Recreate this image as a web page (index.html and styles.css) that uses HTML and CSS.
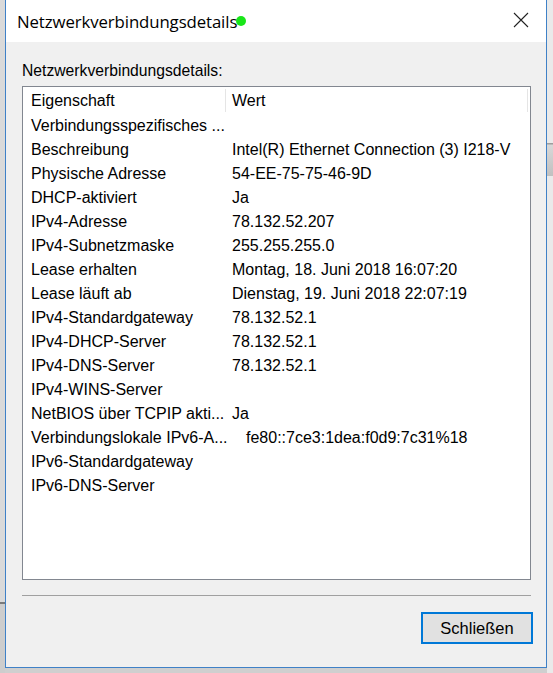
FILE: index.html
```html
<!DOCTYPE html>
<html lang="de">
<head>
<meta charset="utf-8">
<title>Netzwerkverbindungsdetails</title>
<link rel="stylesheet" href="styles.css">
</head>
<body>
<div class="desktop">
  <div class="side-strip"></div>
  <div class="window">
    <div class="titlebar">
      <span class="title">Netzwerkverbindungsdetails</span>
      <span class="dot"></span>
      <svg class="close" width="16" height="16" viewBox="0 0 16 16"><path d="M1 1 L15 15 M15 1 L1 15" stroke="#222" stroke-width="1.1" fill="none"/></svg>
    </div>
    <div class="content">
      <div class="label">Netzwerkverbindungsdetails:</div>
      <div class="listbox">
        <div class="row header">
          <div class="c1">Eigenschaft</div>
          <div class="c2">Wert</div>
        </div>
        <div class="row"><div class="c1">Verbindungsspezifisches ...</div><div class="c2"></div></div>
        <div class="row"><div class="c1">Beschreibung</div><div class="c2">Intel(R) Ethernet Connection (3) I218-V</div></div>
        <div class="row"><div class="c1">Physische Adresse</div><div class="c2">54-EE-75-75-46-9D</div></div>
        <div class="row"><div class="c1">DHCP-aktiviert</div><div class="c2">Ja</div></div>
        <div class="row"><div class="c1">IPv4-Adresse</div><div class="c2">78.132.52.207</div></div>
        <div class="row"><div class="c1">IPv4-Subnetzmaske</div><div class="c2">255.255.255.0</div></div>
        <div class="row"><div class="c1">Lease erhalten</div><div class="c2">Montag, 18. Juni 2018 16:07:20</div></div>
        <div class="row"><div class="c1">Lease läuft ab</div><div class="c2">Dienstag, 19. Juni 2018 22:07:19</div></div>
        <div class="row"><div class="c1">IPv4-Standardgateway</div><div class="c2">78.132.52.1</div></div>
        <div class="row"><div class="c1">IPv4-DHCP-Server</div><div class="c2">78.132.52.1</div></div>
        <div class="row"><div class="c1">IPv4-DNS-Server</div><div class="c2">78.132.52.1</div></div>
        <div class="row"><div class="c1">IPv4-WINS-Server</div><div class="c2"></div></div>
        <div class="row"><div class="c1">NetBIOS über TCPIP akti...</div><div class="c2">Ja</div></div>
        <div class="row"><div class="c1">Verbindungslokale IPv6-A...</div><div class="c2 shifted">fe80::7ce3:1dea:f0d9:7c31%18</div></div>
        <div class="row"><div class="c1">IPv6-Standardgateway</div><div class="c2"></div></div>
        <div class="row"><div class="c1">IPv6-DNS-Server</div><div class="c2"></div></div>
      </div>
      <div class="separator"></div>
      <div class="actions">
        <button class="btn">Schließen</button>
      </div>
    </div>
  </div>
  <div class="right-strip"><div class="right-bar"></div></div>
</div>
</body>
</html>
```
FILE: styles.css
```css
html, body {
  margin: 0;
  padding: 0;
  background: #cfcfcf;
  width: 553px;
  height: 673px;
  overflow: hidden;
}
.desktop {
  display: flex;
  align-items: flex-start;
  height: 673px;
  font-family: "Liberation Sans", Arial, sans-serif;
}
.side-strip {
  width: 5px;
  height: 673px;
  background: linear-gradient(#dadada 0, #dadada 602px, #7a7a7a 602px, #7a7a7a 604px, #cdcdcd 604px);
  flex: none;
}
.window {
  flex: none;
  width: 540px;
  height: 667px;
  border: 1px solid #3f81c7;
  border-top: none;
  background: #f0f0f0;
  display: flex;
  flex-direction: column;
}
.titlebar {
  height: 42px;
  background: #ffffff;
  display: flex;
  align-items: center;
  padding-left: 11px;
  position: relative;
  flex: none;
}
.title {
  font-family: "Open Sans", "Noto Sans", sans-serif;
  font-size: 16.8px;
  color: #000;
  letter-spacing: -0.1px;
}
.dot {
  position: absolute;
  left: 230px;
  top: 16px;
  width: 10px;
  height: 10px;
  border-radius: 50%;
  background: #19e619;
}
.close {
  position: absolute;
  left: 507px;
  top: 12px;
}
.content {
  padding: 20px 0 0 16px;
  display: flex;
  flex-direction: column;
  flex: 1;
}
.label {
  font-size: 15.7px;
  line-height: 17px;
  color: #000;
  height: 24px;
}
.listbox {
  width: 507px;
  height: 492px;
  border: 1px solid #828790;
  background: #fff;
  font-size: 16px;
  color: #000;
}
.row {
  display: flex;
  height: 24px;
  align-items: center;
  padding-top: 4px;
  box-sizing: border-box;
}
.row.header {
  height: 25px;
  padding-top: 2px;
}
.c1 {
  width: 202px;
  padding-left: 8px;
  white-space: nowrap;
  flex: none;
  box-sizing: border-box;
}
.header .c1 {
  border-right: 1px solid #e5e5e5;
  height: 23px;
  display: flex;
  align-items: center;
  width: 203px;
}
.c2 {
  padding-left: 7px;
  white-space: nowrap;
  flex: 1;
}
.header .c2 {
  padding-left: 6px;
  border-right: 1px solid #e5e5e5;
  height: 23px;
  display: flex;
  align-items: center;
  margin-right: 2px;
}
.c2.shifted {
  padding-left: 21px;
}
.separator {
  width: 509px;
  height: 1px;
  background: #a0a0a0;
  margin-top: 15px;
}
.actions {
  display: flex;
  justify-content: flex-end;
  width: 511px;
  margin-top: 16px;
}
.btn {
  width: 112px;
  height: 32px;
  border: 2px solid #0078d7;
  background: #e1e1e1;
  font-family: "Liberation Sans", Arial, sans-serif;
  font-size: 16.5px;
  color: #000;
  padding: 0;
}
.right-strip {
  flex: 1;
  height: 673px;
  background: #eaeaea;
  padding-top: 143px;
  box-sizing: border-box;
}
.right-bar {
  height: 33px;
  background: linear-gradient(#9d9d9d 0, #9d9d9d 1px, #d8d8d8 2px, #c0c0c0 100%);
}
```
